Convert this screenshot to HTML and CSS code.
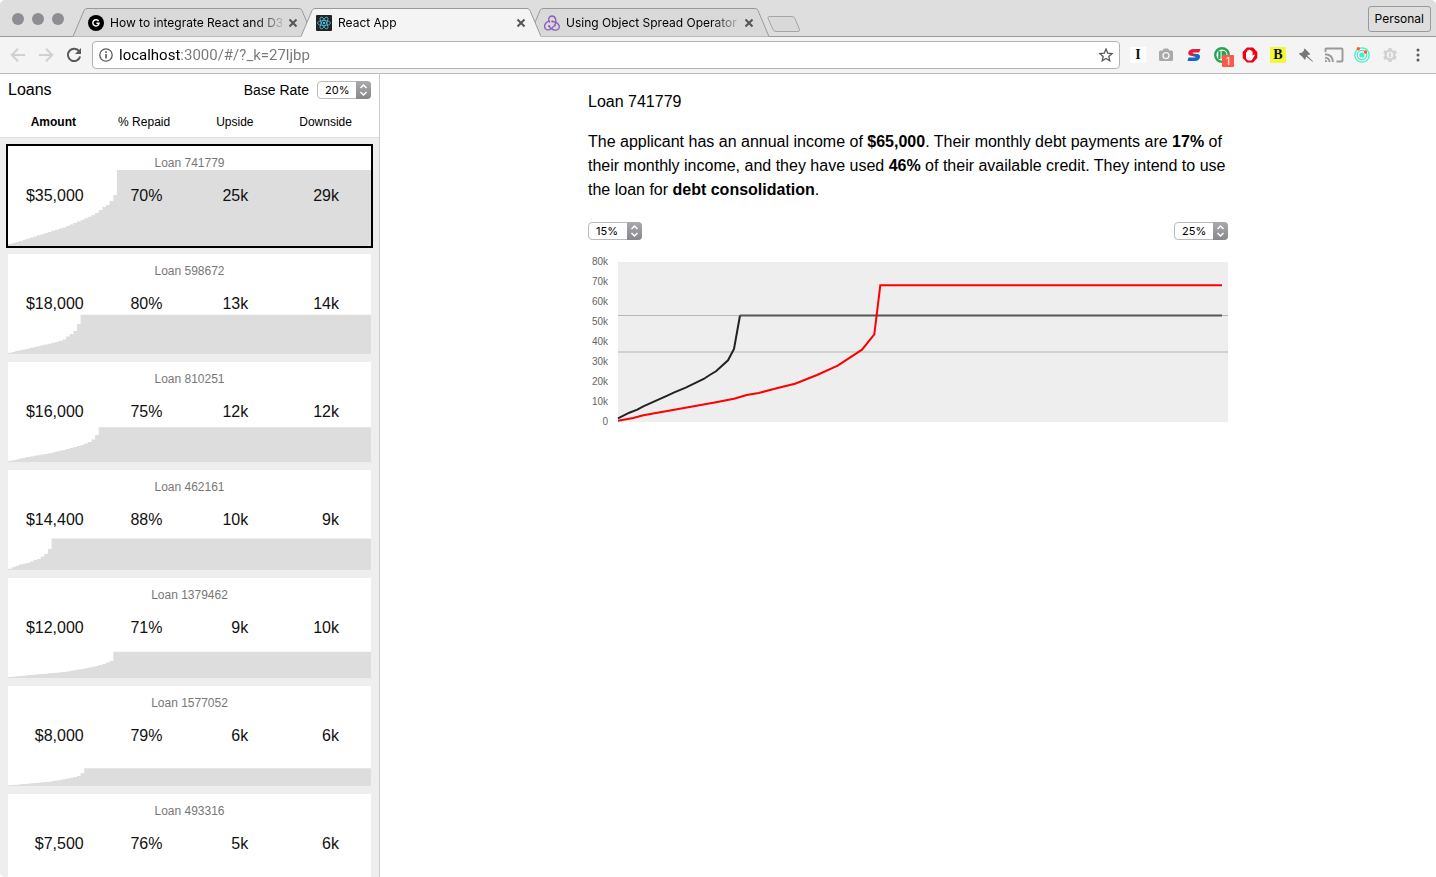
FILE: index.html
```html
<!DOCTYPE html>
<html lang="en">
<head>
<meta charset="utf-8">
<title>React App</title>
<link rel="stylesheet" href="styles.css">
</head>
<body>
<div class="window">
  <header class="titlebar">
    <div class="lights"><span class="light"></span><span class="light"></span><span class="light"></span></div>
    <div class="tabs">
      <div class="tab">
        <svg class="tab-shape" viewBox="0 0 240 29"><path d="M0 28.500L11 2.500Q12 .5 14 .5H226Q228 .5 229 2.500L240 28.500"/></svg>
        <svg class="favicon" viewBox="0 0 16 16"><circle cx="8" cy="8" r="8" fill="#000"/><path d="M10.600 6.200A3.100 3.100 0 1 0 11 8.300H8.400" fill="none" stroke="#fff" stroke-width="1.500"/></svg>
        <span class="tab-title">How to integrate React and D3</span>
        <button class="close" aria-label="Close tab"><svg viewBox="0 0 10 10"><path d="M1.500 1.500L8.500 8.500M8.500 1.500L1.500 8.500"/></svg></button>
      </div>
      <div class="tab tab-active">
        <svg class="tab-shape" viewBox="0 0 240 29"><path d="M0 28.500L11 2.500Q12 .5 14 .5H226Q228 .5 229 2.500L240 28.500V29H0Z" stroke="none"/><path d="M0 28.500L11 2.500Q12 .5 14 .5H226Q228 .5 229 2.500L240 28.500"/></svg>
        <svg class="favicon" viewBox="0 0 16 16"><rect width="16" height="16" rx="1" fill="#222"/><g fill="none" stroke="#53c1de" stroke-width=".8"><ellipse cx="8" cy="8" rx="6.600" ry="2.500"/><ellipse cx="8" cy="8" rx="6.600" ry="2.500" transform="rotate(60 8 8)"/><ellipse cx="8" cy="8" rx="6.600" ry="2.500" transform="rotate(120 8 8)"/></g><circle cx="8" cy="8" r="1.200" fill="#53c1de"/></svg>
        <span class="tab-title">React App</span>
        <button class="close" aria-label="Close tab"><svg viewBox="0 0 10 10"><path d="M1.500 1.500L8.500 8.500M8.500 1.500L1.500 8.500"/></svg></button>
      </div>
      <div class="tab">
        <svg class="tab-shape" viewBox="0 0 240 29"><path d="M0 28.500L11 2.500Q12 .5 14 .5H226Q228 .5 229 2.500L240 28.500"/></svg>
        <svg class="favicon" viewBox="0 0 16 16"><g fill="none" stroke="#8a5cc2" stroke-width="1.300" stroke-linecap="round"><path d="M10.800 10.200C13 6.500 11.800 1 8 1C5 1 3.600 4.200 5.600 7"/><path d="M5.200 5.900C1.200 7.200-.6 11.200 1.500 13.800C3.300 16 7.500 14.800 9.300 11.500"/><path d="M5.300 11.600C8.200 15.600 13.200 16.200 14.900 13.300C16.300 10.600 13.400 6.700 8.800 6.500"/></g><g fill="#8a5cc2"><circle cx="10.700" cy="10.600" r="1.100"/><circle cx="8.300" cy="6.500" r="1.100"/><circle cx="5.200" cy="11.200" r="1.100"/></g></svg>
        <span class="tab-title">Using Object Spread Operator</span>
        <button class="close" aria-label="Close tab"><svg viewBox="0 0 10 10"><path d="M1.500 1.500L8.500 8.500M8.500 1.500L1.500 8.500"/></svg></button>
      </div>
      <button class="new-tab" aria-label="New tab"><svg viewBox="0 0 34 17"><path d="M2.500 .5H25Q27 .5 28 2.500L32.500 13.500Q33 15.500 31 15.500H9Q7 15.500 6 13.500L1 2.500Q.5 .5 2.500 .5Z"/></svg></button>
    </div>
    <button class="profile">Personal</button>
  </header>

  <div class="toolbar">
    <button class="tool" aria-label="Back"><svg viewBox="0 0 16 16" class="faint"><path d="M15 8H2.500M8 1.800L1.800 8L8 14.200"/></svg></button>
    <button class="tool" aria-label="Forward"><svg viewBox="0 0 16 16" class="faint"><path d="M1 8H13.500M8 1.800L14.200 8L8 14.200"/></svg></button>
    <button class="tool" aria-label="Reload"><svg viewBox="0 0 16 16"><path d="M13.200 4.300A6.200 6.200 0 1 0 14.100 9.500" fill="none" stroke="#5a5a5a" stroke-width="2"/><path d="M15 1V7H9Z" fill="#5a5a5a"/></svg></button>
    <div class="omnibox">
      <svg class="info" viewBox="0 0 14 14"><circle cx="7" cy="7" r="6.200" fill="none" stroke="#5a5a5a" stroke-width="1.300"/><path d="M6.200 6H7.800V10.600H6.200ZM6.200 3.300H7.800V4.900H6.200Z" fill="#5a5a5a"/></svg>
      <input class="url" type="text" aria-label="Address" value="localhost:3000/#/?_k=27ljbp">
      <button class="star" aria-label="Bookmark"><svg viewBox="0 0 14 14"><path d="M7 1L8.700 5.100L13.200 5.500L9.800 8.400L10.800 12.800L7 10.500L3.200 12.800L4.200 8.400L.8 5.500L5.300 5.100Z" fill="none" stroke="#5a5a5a" stroke-width="1.300"/></svg></button>
    </div>
    <div class="extensions">
      <button class="tool" aria-label="Instapaper"><span class="glyph glyph-white">I</span></button>
      <button class="tool" aria-label="Screenshot"><svg viewBox="0 0 16 16"><path d="M2.500 3.500H4.500L6 1.500H10L11.500 3.500H13.500Q15 3.500 15 5V12.500Q15 14 13.500 14H2.500Q1 14 1 12.500V5Q1 3.500 2.500 3.500Z" fill="#a9a9a9"/><circle cx="8" cy="8.600" r="3" fill="none" stroke="#f4f4f4" stroke-width="1.400"/></svg></button>
      <button class="tool" aria-label="Stylish"><svg viewBox="0 0 16 16"><path d="M14.500 2H7.500Q3 2.200 2.300 5.400Q1.900 8.200 5 8.800L10.500 9.800L13.800 8.400Q13.200 7.200 10.500 6.900L7.200 6.400Q6.400 6 6.800 5.400H13.200Z" fill="#e0203a"/><path d="M1.500 14H9Q13.200 13.800 14 10.300Q14.400 7.600 11.200 6.900L8 7.900L5.200 8.800L9 9.500Q10 9.900 9.400 10.600H2.500Z" fill="#1468c8"/></svg></button>
      <button class="tool" aria-label="Pushbullet, 1 notification"><svg viewBox="0 0 16 16"><circle cx="8" cy="8" r="6.800" fill="#fff" stroke="#27a552" stroke-width="2.400"/><path d="M4.300 4H6.600V12H4.300ZM7.600 4H9.500Q12.500 4.300 12.500 8T9.500 12H7.600Z" fill="#27a552"/></svg><span class="count">1</span></button>
      <button class="tool" aria-label="Ad blocker"><svg viewBox="0 0 16 16"><path d="M5 .5H11L15.300 5V11L11 15.500H5L.7 11V5Z" fill="#f00010"/><path d="M4 5.500Q4.600 4.700 5.200 5.500V3.600Q5.900 2.800 6.500 3.600V2.900Q7.200 2 7.900 2.900V3.300Q8.600 2.500 9.300 3.300V4.500Q10 3.800 10.600 4.500V8.800L12 7.400Q13 7.400 12.700 8.500L10 12.800Q9.600 13.500 8.700 13.500H6.800Q4 13.300 4 10.200Z" fill="#fff"/></svg></button>
      <button class="tool" aria-label="Bitly"><span class="glyph glyph-yellow">B</span></button>
      <button class="tool" aria-label="Pin"><svg viewBox="0 0 16 16"><path d="M6.800 1.500L12.200 6.900L11.200 8L10.200 7.800L9.300 8.700L15 14.200L14.500 14.700L8.400 9.700L7.600 10.400L7.900 11.700L6.700 12.700L4.100 9.400L1 6.900L2 5.800L3.400 6L6.100 3.500L5.800 2.500Z" fill="#777"/></svg></button>
      <button class="tool tool-cast" aria-label="Cast"><svg viewBox="0 0 20 16"><path d="M1.500 5V2.500Q1.500 1.500 2.500 1.500H17.500Q18.500 1.500 18.500 2.500V13.500Q18.500 14.500 17.500 14.500H12.500M1 7.200Q8.700 7.500 9 15M1 10.600Q5.300 11 5.600 15" fill="none" stroke="#999" stroke-width="1.900"/><path d="M1 12.500Q3 12.800 3.300 15H1Z" fill="#999"/></svg></button>
      <button class="tool" aria-label="Orbit"><svg viewBox="0 0 16 16"><g fill="none" stroke="#48eccb" stroke-width="1.300"><circle cx="8" cy="8" r="7.200"/><circle cx="8" cy="8" r="4.700"/></g><circle cx="8" cy="8" r="2.600" fill="#48eccb"/><g fill="#ff5a1f"><circle cx="4.300" cy="1.800" r="1.700"/><circle cx="11.500" cy="5" r="1.700"/></g></svg></button>
      <button class="tool" aria-label="Settings"><svg viewBox="0 0 16 16"><circle cx="8" cy="8" r="4.400" fill="none" stroke="#d2d2d2" stroke-width="2.400"/><g stroke="#d2d2d2" stroke-width="3.400"><path d="M8 1V4M8 12V15"/><path d="M8 1V4M8 12V15" transform="rotate(60 8 8)"/><path d="M8 1V4M8 12V15" transform="rotate(120 8 8)"/></g><path d="M8 5.800V10.200" stroke="#d2d2d2" stroke-width="2"/></svg></button>
      <button class="tool" aria-label="Menu"><svg viewBox="0 0 16 16"><g fill="#5a5a5a"><circle cx="8" cy="3" r="1.500"/><circle cx="8" cy="8" r="1.500"/><circle cx="8" cy="13" r="1.500"/></g></svg></button>
    </div>
  </div>

  <div class="page">
    <aside class="sidebar">
      <div class="sidebar-head">
        <div class="sidebar-top">
          <h1 class="title">Loans</h1>
          <label class="rate-label" for="base-rate">Base Rate</label>
          <span class="picker"><select id="base-rate"><option>20%</option></select><svg viewBox="0 0 15 18"><path d="M4.500 7L7.500 4L10.500 7M4.500 11L7.500 14L10.500 11"/></svg></span>
        </div>
        <div class="columns">
          <button class="sort sort-active">Amount</button>
          <button class="sort">% Repaid</button>
          <button class="sort">Upside</button>
          <button class="sort">Downside</button>
        </div>
      </div>
      <ul class="loans" id="loans"></ul>
    </aside>

    <main class="detail">
      <div class="detail-body">
        <h2 class="title">Loan 741779</h2>
        <p class="summary">The applicant has an annual income of <b>$65,000</b>. Their monthly debt payments are <b>17%</b> of their monthly income, and they have used <b>46%</b> of their available credit. They intend to use the loan for <b>debt consolidation</b>.</p>
        <div class="rates">
          <span class="picker"><select aria-label="First rate"><option>15%</option></select><svg viewBox="0 0 15 18"><path d="M4.500 7L7.500 4L10.500 7M4.500 11L7.500 14L10.500 11"/></svg></span>
          <span class="picker"><select aria-label="Second rate"><option>25%</option></select><svg viewBox="0 0 15 18"><path d="M4.500 7L7.500 4L10.500 7M4.500 11L7.500 14L10.500 11"/></svg></span>
        </div>
        <div class="chart">
          <div class="axis"><span>80k</span><span>70k</span><span>60k</span><span>50k</span><span>40k</span><span>30k</span><span>20k</span><span>10k</span><span>0</span></div>
          <svg class="plot" viewBox="0 0 610 160" preserveAspectRatio="none" role="img" aria-label="Repayment by rate">
            <path d="M0 53.500H610" stroke="#b5b5b5"/>
            <path d="M0 90H610" stroke="#d0d3d0" stroke-width="2"/>
            <path d="M0 156.300L11.300 150.700L19.300 147.700L25.300 144.300L49.300 133.700L55.700 130.700L67.700 125.700L85.700 117L91.700 113L98 109.300L110 98.300L116 87L122 53.500" class="line"/>
            <path d="M122 53.500H604" class="line line-soft"/>
            <path d="M0 158.700L15.300 156L25.300 153.300L49.300 149L98 140.300L116 136.700L128.700 133L140.700 131L158.700 126.300L177 121.700L199 113L219.700 103.700L244 87.700L256.300 72.300L262.300 23.300H604" class="line line-red"/>
          </svg>
        </div>
      </div>
    </main>
  </div>
</div>
<script src="app.js"></script>
</body>
</html>
```
FILE: app.js
```js
// Curve knots are [bar, height] pairs; the last one starts the plateau.
const loans = [
  { id: 741779, values: ['$35,000', '70%', '25k', '29k'], curve: [[0, 2], [3, 5], [10, 13], [15, 18.5], [20, 26], [23, 31], [24, 33], [25, 36], [26, 39], [27, 41], [28, 45], [29, 51], [30, 76]], selected: true },
  { id: 598672, values: ['$18,000', '80%', '13k', '14k'], curve: [[0, 1.3], [7, 7], [13, 12], [15, 14.5], [16, 17.5], [17, 20], [18, 23], [19, 30], [20, 39.3]] },
  { id: 810251, values: ['$16,000', '75%', '12k', '12k'], curve: [[0, 1], [5, 5], [10, 8], [15, 12], [18, 15], [20, 17], [22, 20], [23, 22.5], [24, 27], [25, 34.7]] },
  { id: 462161, values: ['$14,400', '88%', '10k', '9k'], curve: [[0, 1.3], [3, 5.5], [5, 7], [7, 10], [8, 11], [9, 13.5], [10, 16], [11, 21], [12, 31.5]] },
  { id: 1379462, values: ['$12,000', '71%', '9k', '10k'], curve: [[0, 1], [9, 4], [15, 6], [20, 9], [24, 12], [26, 14], [27, 15.5], [28, 17], [29, 26.3]] },
  { id: 1577052, values: ['$8,000', '79%', '6k', '6k'], curve: [[0, 0.7], [11, 4.3], [15, 6.7], [18, 9], [19, 10], [20, 12.7], [21, 17.7]] },
  { id: 493316, values: ['$7,500', '76%', '5k', '6k'], curve: [[0, 0.7], [12, 4], [20, 9], [24, 16]] },
];

function heightAt(curve, bar) {
  for (let k = 1; k < curve.length; k++) {
    const [x0, h0] = curve[k - 1];
    const [x1, h1] = curve[k];
    if (bar < x1) return h0 + (h1 - h0) * (bar - x0) / (x1 - x0);
  }
  return curve[curve.length - 1][1];
}

function area(curve) {
  let d = 'M0 100';
  for (let bar = 0; bar < 100; bar++) {
    d += `V${(100 - heightAt(curve, bar)).toFixed(2)}H${bar + 1}`;
  }
  return d + 'V100Z';
}

document.getElementById('loans').innerHTML = loans.map((loan) => `
  <li><button class="loan${loan.selected ? ' loan-selected' : ''}">
    <svg class="loan-area" viewBox="0 0 100 100" preserveAspectRatio="none"><path d="${area(loan.curve)}"/></svg>
    <span class="loan-name">Loan ${loan.id}</span>
    <span class="loan-values">${loan.values.map((v) => `<span>${v}</span>`).join('')}</span>
  </button></li>`).join('');
```
FILE: styles.css
```css
* { box-sizing: border-box; }
body { margin: 0; background: #fff; color: #000; font: 16px/24px "Liberation Sans", Arial, sans-serif; }
button { margin: 0; padding: 0; border: 0; background: none; color: inherit; font: inherit; }
svg { display: block; }

.window { display: flex; flex-direction: column; height: 100vh; overflow: hidden; border-radius: 5px; }

/* Browser frame */
.titlebar { display: flex; align-items: flex-end; flex: none; height: 37px; background: #dedede; box-shadow: inset 0 -1px #999; font: 12px/16px Inter, Roboto, sans-serif; }
.lights { display: flex; gap: 8px; width: 73px; padding: 0 0 12px 12px; }
.light { width: 12px; height: 12px; border-radius: 50%; background: #8e8d93; }
.tabs { display: flex; flex: 1; }
.tab { position: relative; display: flex; align-items: center; gap: 6px; width: 240px; height: 29px; margin-right: -12px; padding: 0 15px; }
.tab-active { z-index: 1; }
.tab-shape { position: absolute; inset: 0; width: 100%; height: 100%; fill: #d9d9d9; stroke: #999; }
.tab-active .tab-shape { fill: #f4f4f4; }
.favicon { position: relative; flex: none; width: 16px; height: 16px; }
.tab-title { position: relative; flex: 1; overflow: hidden; white-space: nowrap; -webkit-mask-image: linear-gradient(90deg, #000 145px, transparent 178px); }
.close { position: relative; width: 10px; height: 10px; }
.close svg { width: 10px; height: 10px; stroke: #555; stroke-width: 2; }
.new-tab { align-self: center; margin: 3px 0 0 10px; }
.new-tab svg { width: 34px; height: 17px; fill: #d9d9d9; stroke: #a5a5a5; }
.profile { align-self: center; height: 26px; margin-right: 5px; padding: 0 6px; border: 1px solid #999; border-radius: 3px; }

.toolbar { display: flex; align-items: center; gap: 4px; flex: none; height: 37px; padding: 0 4px; background: #f4f4f4; border-bottom: 1px solid #bbb; }
.tool { position: relative; display: flex; align-items: center; justify-content: center; width: 28px; height: 28px; }
.toolbar > .tool + .tool { margin-left: -4px; }
.tool svg { width: 16px; height: 16px; }
.tool-cast svg { width: 20px; }
.faint { fill: none; stroke: #d0d0d0; stroke-width: 2; }
.omnibox { display: flex; align-items: center; flex: 1; gap: 6px; height: 28px; padding: 0 6px; background: #fff; border: 1px solid #b3b3b3; border-radius: 4px; }
.info { width: 14px; height: 14px; }
.url { flex: 1; min-width: 0; padding: 0; border: 0; outline: 0; font: 15px/20px Roboto, sans-serif; color: transparent; background: linear-gradient(90deg, #000 62px, #777 62px); -webkit-background-clip: text; background-clip: text; }
.star svg { width: 14px; height: 14px; }
.extensions { display: flex; }
.glyph { width: 16px; font: bold 14px/16px "Liberation Serif", serif; color: #111; }
.glyph-white { background: #fff; }
.glyph-yellow { background: #f4f63c; }
.count { position: absolute; left: 14px; top: 14px; width: 12px; border-radius: 1px; background: #fb5a48; color: #fff; font: 10px/12px Inter, sans-serif; }

/* Shared controls */
.title { margin: 0; font-size: 16px; font-weight: normal; }
.picker { position: relative; display: block; width: 54px; height: 18px; }
.picker select { display: block; width: 100%; height: 100%; padding: 0 0 0 7px; border: 1px solid #bbb; border-radius: 4px; appearance: none; background: #fff; color: #000; font: 11px/16px Inter, Roboto, sans-serif; }
.picker svg { position: absolute; top: 0; right: 0; width: 15px; height: 18px; border-radius: 0 4px 4px 0; background: linear-gradient(#aaa9ae, #88878c); fill: none; stroke: #fff; stroke-width: 1.5; pointer-events: none; }

/* Sidebar */
.page { display: flex; flex: 1; min-height: 0; }
.sidebar { flex: none; width: 380px; overflow: hidden; background: #eee; border-right: 1px solid #ccc; }
.sidebar-head { padding: 4px 8px 3px; background: #fff; border-bottom: 1px solid #ddd; }
.sidebar-top { display: flex; align-items: center; gap: 8px; height: 24px; }
.rate-label { margin-left: auto; font-size: 14px; }
.columns { display: grid; grid-template-columns: repeat(4, 1fr); padding: 8px 0 0; }
.sort { font-size: 12px; line-height: 24px; }
.sort-active { font-weight: bold; }
.loans { display: grid; gap: 8px; margin: 0; padding: 8px; list-style: none; }
.loan { position: relative; display: block; width: 100%; height: 100px; background: #fff; vertical-align: top; }
.loan-selected { outline: 2px solid #000; }
.loan-area { position: absolute; inset: 0; width: 100%; height: 100%; fill: #ddd; }
.loan-name { position: relative; display: block; height: 32px; padding-top: 1px; color: #777; font-size: 12px; }
.loan-values { position: relative; display: grid; grid-template-columns: repeat(4, 1fr); height: 60px; padding-top: 2px; color: #111; text-align: right; }
.loan-values span { padding-right: 32px; }
.loan-values span:nth-child(1) { padding-right: 15px; }
.loan-values span:nth-child(2) { padding-right: 27px; }

/* Loan detail */
.detail { flex: 1; padding: 16px; }
.detail-body { max-width: 640px; margin: 0 auto; }
.summary { margin: 16px 0 20px; }
.rates { display: flex; justify-content: space-between; margin-bottom: 12px; }
.chart { display: flex; align-items: center; gap: 10px; }
.axis { display: grid; flex: none; width: 20px; color: #666; font-size: 10px; line-height: 20px; text-align: right; }
.plot { flex: 1; min-width: 0; height: 160px; background: #eee; overflow: visible; }
.line { fill: none; stroke: #222; stroke-width: 2; }
.line-soft { stroke: #555; }
.line-red { stroke: #f00; }
```
